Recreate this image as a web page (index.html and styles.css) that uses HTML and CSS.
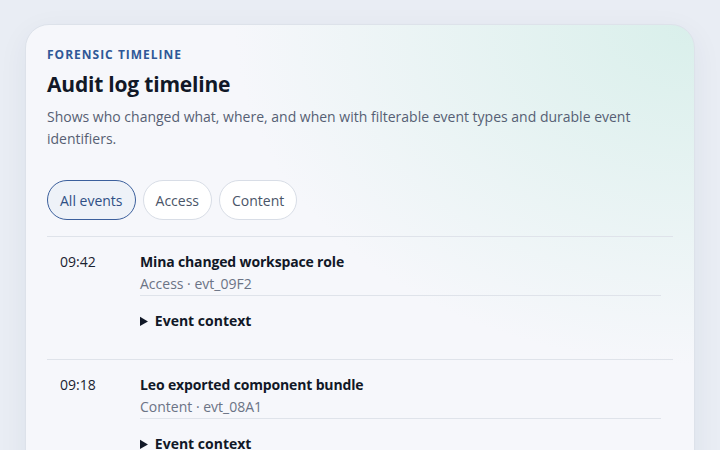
FILE: index.html
```html
<!DOCTYPE html>
<html lang="en">
<head>
<meta charset="utf-8">
<title>Audit log timeline</title>
<link rel="stylesheet" href="styles.css">
</head>
<body>
<main class="card">
  <p class="eyebrow">Forensic timeline</p>
  <h1 class="title">Audit log timeline</h1>
  <p class="desc">Shows who changed what, where, and when with filterable event types and durable event identifiers.</p>
  <div class="chips">
    <button class="chip chip-active">All events</button>
    <button class="chip">Access</button>
    <button class="chip">Content</button>
  </div>
  <ol class="events">
    <li class="event">
      <time class="time">09:42</time>
      <div class="body">
        <div class="meta">
          <div class="ev-title">Mina changed workspace role</div>
          <div class="ev-sub">Access · evt_09F2</div>
        </div>
        <details class="ctx"><summary>Event context</summary></details>
      </div>
    </li>
    <li class="event">
      <time class="time">09:18</time>
      <div class="body">
        <div class="meta">
          <div class="ev-title">Leo exported component bundle</div>
          <div class="ev-sub">Content · evt_08A1</div>
        </div>
        <details class="ctx"><summary>Event context</summary></details>
      </div>
    </li>
  </ol>
</main>
</body>
</html>
```
FILE: styles.css
```css
* { box-sizing: border-box; }
html, body { height: 100%; }
body {
  margin: 0;
  padding: 24px 25px 0;
  background: #e9edf4;
  font-family: "Open Sans", "Noto Sans", sans-serif;
  color: #111827;
  overflow: hidden;
}
.card {
  border: 1px solid #dde2ea;
  border-radius: 24px;
  background:
    radial-gradient(ellipse 460px 340px at 100% 0%, rgba(212, 238, 232, 0.85), rgba(212, 238, 232, 0) 100%),
    #f6f7fb;
  box-shadow: 0 8px 30px rgba(30, 45, 80, 0.06);
  padding: 22px 21px 0;
  min-height: 600px;
}
.eyebrow {
  margin: 0;
  font-size: 12px;
  line-height: 16px;
  font-weight: 700;
  letter-spacing: 1px;
  text-transform: uppercase;
  color: #2f5897;
}
.title {
  margin: 6px 0 0;
  font-size: 21px;
  line-height: 30px;
  font-weight: 700;
  color: #111827;
  letter-spacing: -0.2px;
}
.desc {
  margin: 7px 0 0;
  font-size: 14px;
  line-height: 22px;
  font-weight: 500;
  color: #565f74;
}
.chips {
  display: flex;
  gap: 7px;
  margin-top: 30px;
}
.chip {
  height: 40px;
  padding: 0 12px;
  border-radius: 20px;
  border: 1px solid #d8dde6;
  background: #ffffff;
  font: inherit;
  font-size: 14px;
  font-weight: 500;
  color: #4a5568;
}
.chip-active {
  border-color: #3b5f9c;
  background: #eef2f8;
  color: #2f4f85;
}
.events {
  list-style: none;
  margin: 16px 0 0;
  padding: 0;
}
.event {
  display: grid;
  grid-template-columns: 80px 1fr;
  border-top: 1px solid #dfe3ea;
  padding: 14px 12px 27px 13px;
}
.time {
  font-size: 14px;
  line-height: 22px;
  font-weight: 500;
  color: #1a2230;
}
.meta {
  border-bottom: 1px solid #dfe3ea;
}
.ev-title {
  font-size: 14px;
  line-height: 22px;
  font-weight: 700;
  color: #111827;
  letter-spacing: -0.15px;
}
.ev-sub {
  font-size: 14px;
  line-height: 22px;
  font-weight: 500;
  color: #6b7385;
}
.ctx {
  margin-top: 14px;
}
.ctx summary {
  font-size: 14px;
  line-height: 22px;
  font-weight: 700;
  color: #111827;
  cursor: pointer;
}
```
